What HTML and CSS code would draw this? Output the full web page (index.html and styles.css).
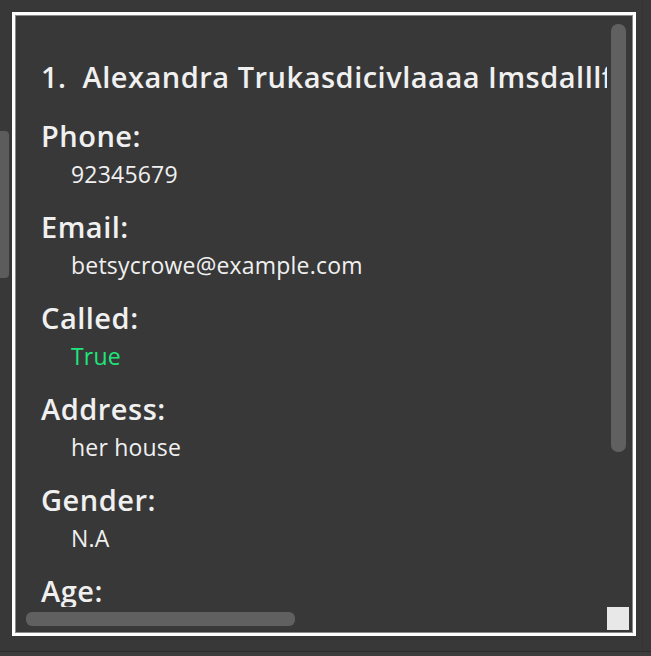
FILE: index.html
```html
<!DOCTYPE html>
<html>
<head>
<meta charset="utf-8">
<link rel="stylesheet" href="styles.css">
</head>
<body>
<div class="window">
  <div class="outer-track"><div class="outer-thumb"></div></div>
  <div class="card">
    <div class="card-inner">
      <div class="viewport">
        <div class="content">
          <div class="title">1.&nbsp;&nbsp;Alexandra Trukasdicivlaaaa Imsdalllf</div>
          <div class="field">
            <div class="label">Phone:</div>
            <div class="value">92345679</div>
          </div>
          <div class="field">
            <div class="label">Email:</div>
            <div class="value">betsycrowe@example.com</div>
          </div>
          <div class="field">
            <div class="label">Called:</div>
            <div class="value value-true">True</div>
          </div>
          <div class="field">
            <div class="label">Address:</div>
            <div class="value">her house</div>
          </div>
          <div class="field">
            <div class="label">Gender:</div>
            <div class="value">N.A</div>
          </div>
          <div class="field">
            <div class="label">Age:</div>
            <div class="value">21</div>
          </div>
        </div>
      </div>
      <div class="vtrack"><div class="vthumb"></div></div>
      <div class="htrack"><div class="hthumb"></div></div>
      <div class="corner"><div class="corner-box"></div></div>
    </div>
  </div>
  <div class="right-strip"></div>
</div>
<div class="bottom-bar"></div>
</body>
</html>
```
FILE: styles.css
```css
html, body {
  margin: 0;
  padding: 0;
}
body {
  width: 651px;
  height: 656px;
  background: #383838;
  overflow: hidden;
  font-family: "Open Sans", "Liberation Sans", sans-serif;
  color: #f0f0f0;
}
.window {
  display: flex;
  height: 651px;
}
.outer-track {
  width: 12px;
  flex: none;
}
.outer-thumb {
  width: 9px;
  height: 147px;
  margin-top: 131px;
  background: #5c5c5c;
  border-radius: 0 4px 4px 0;
}
.card {
  margin-top: 12px;
  width: 618px;
  height: 618px;
  border: 3px solid #ffffff;
  flex: none;
}
.card-inner {
  height: 616px;
  border: 1px solid #8a8a8a;
  display: grid;
  grid-template-columns: 591px 1fr;
  grid-template-rows: 591px 1fr;
  background: #383838;
}
.viewport {
  overflow: hidden;
}
.content {
  padding: 41px 0 0 25px;
  white-space: nowrap;
}
.title {
  font-size: 29px;
  font-weight: 600;
  letter-spacing: 0.5px;
  line-height: 40px;
  margin-bottom: 20px;
}
.field {
  margin-bottom: 15px;
}
.label {
  font-size: 29px;
  font-weight: 600;
  letter-spacing: 0.5px;
  line-height: 38px;
}
.value {
  font-size: 23px;
  letter-spacing: 0.2px;
  line-height: 38px;
  padding-left: 30px;
}
.value-true {
  color: #1ee67d;
}
.vtrack {
  padding: 8px 0 0 4px;
}
.vthumb {
  width: 15px;
  height: 428px;
  background: #606060;
  border-radius: 7px;
}
.htrack {
  padding: 5px 0 0 10px;
}
.hthumb {
  width: 269px;
  height: 14px;
  background: #606060;
  border-radius: 6px;
}
.corner {
  display: flex;
}
.corner-box {
  width: 22px;
  height: 23px;
  background: #e8e8e8;
}
.right-strip {
  margin-left: 6px;
  width: 1px;
  background: #333333;
}
.bottom-bar {
  height: 5px;
  border-top: 1px solid #2c2c2c;
  background: #3d3d3d;
}
```
